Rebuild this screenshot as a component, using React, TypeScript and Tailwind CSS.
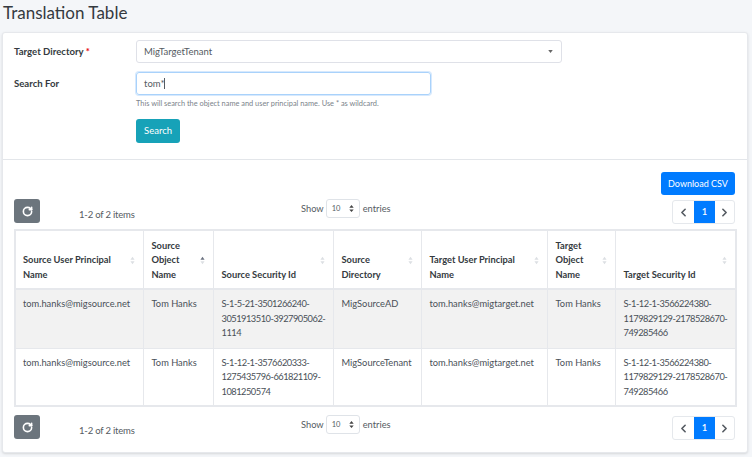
import { ChevronLeft, ChevronRight, RotateCw } from 'lucide-react';

const COLUMNS = [
  { title: ['Source User Principal', 'Name'], width: 'w-[128px]' },
  { title: ['Source', 'Object', 'Name'], width: 'w-[70px]', sorted: true },
  { title: ['Source Security Id'], width: 'w-[120px]' },
  { title: ['Source', 'Directory'], width: 'w-[88px]' },
  { title: ['Target User Principal', 'Name'], width: 'w-[126px]' },
  { title: ['Target', 'Object', 'Name'], width: 'w-[68px]' },
  { title: ['Target Security Id'], width: 'w-[121px]' },
];

const ROWS = [
  {
    striped: true,
    cells: [
      ['tom.hanks@migsource.net'],
      ['Tom Hanks'],
      ['S-1-5-21-3501266240-', '3051913510-3927905062-', '1114'],
      ['MigSourceAD'],
      ['tom.hanks@migtarget.net'],
      ['Tom Hanks'],
      ['S-1-12-1-3566224380-', '1179829129-2178528670-', '749285466'],
    ],
  },
  {
    striped: false,
    cells: [
      ['tom.hanks@migsource.net'],
      ['Tom Hanks'],
      ['S-1-12-1-3576620333-', '1275435796-661821109-', '1081250574'],
      ['MigSourceTenant'],
      ['tom.hanks@migtarget.net'],
      ['Tom Hanks'],
      ['S-1-12-1-3566224380-', '1179829129-2178528670-', '749285466'],
    ],
  },
];

function SortIcon({ active }: { active?: boolean }) {
  return (
    <svg width="5" height="9" viewBox="0 0 6 10" className="shrink-0">
      <path d="M3 0.5 L5.5 4 H0.5 Z" fill={active ? '#6b7280' : '#dcdfe3'} />
      <path d="M3 9.5 L5.5 6 H0.5 Z" fill="#dcdfe3" />
    </svg>
  );
}

function Toolbar() {
  return (
    <div className="flex items-start">
      <button className="w-[26px] h-[24px] bg-[#6c757d] rounded-[3px] flex items-center justify-center text-white">
        <RotateCw size={11} strokeWidth={3.5} />
      </button>
      <div className="ml-[39px] w-[222px] mt-[9px] text-[9.5px] leading-[14px] tracking-[-0.2px] text-[#555b62]">1-2 of 2 items</div>
      <div className="flex items-center gap-[2px] text-[9.3px] text-[#555b62] h-[19px]">
        <span>Show</span>
        <div className="w-[34px] h-[19px] border border-[#dfe3e8] rounded-[3px] flex items-center justify-between pl-[5px] pr-[5px] text-[7.5px]">
          <span>10</span>
          <svg width="5" height="7" viewBox="0 0 5 8">
            <path d="M2.5 0 L5 3 H0 Z M2.5 8 L5 5 H0 Z" fill="#444" />
          </svg>
        </div>
        <span className="ml-px">entries</span>
      </div>
      <div className="ml-auto mt-px flex h-[24px] w-[63px] border border-[#e5e8ec] rounded-[3px] overflow-hidden text-[#555b62]">
        <div className="w-[21px] flex items-center justify-center">
          <ChevronLeft size={13} strokeWidth={3} />
        </div>
        <div className="w-[21px] bg-[#007bff] text-white text-[9.5px] font-semibold flex items-center justify-center">1</div>
        <div className="flex-1 flex items-center justify-center">
          <ChevronRight size={13} strokeWidth={3} />
        </div>
      </div>
    </div>
  );
}

export default function App() {
  return (
    <div className="h-[457px] overflow-hidden bg-[#f4f6f9] px-[2px] font-['Lato','Noto_Sans',sans-serif] text-[#495057]">
      <h1 className="h-[32px] pl-px text-[17px] leading-[26px] text-[#343a40]">Translation Table</h1>

      <div className="h-[421px] w-[746px] bg-white border border-[#e6e8ec] rounded-[3px] shadow-sm">
        <div className="h-[127px] border-b border-[#e3e6ea] pl-[11px] pt-[7px]">
          <div className="flex items-center h-[23px]">
            <label className="w-[122px] pt-px text-[9.6px] font-bold text-[#343a40]">
              Target Directory <span className="text-red-600">*</span>
            </label>
            <div className="w-[426px] h-[23px] border border-[#dfe1e8] rounded-[3px] flex items-center justify-between pl-[7px] pr-[8px] text-[9.5px] text-[#555b62]">
              <span className="pt-px">MigTargetTenant</span>
              <svg width="5" height="3" viewBox="0 0 6 4">
                <path d="M0 0 H6 L3 4 Z" fill="#666" />
              </svg>
            </div>
          </div>
          <div className="flex items-center h-[23px] mt-[9px]">
            <label className="w-[122px] pt-px text-[9.6px] font-bold text-[#343a40]">Search For</label>
            <div className="w-[295px] h-[23px] border border-[#a9d2fb] rounded-[3px] shadow-[0_0_0_1px_#d7e9fd] flex items-center pl-[7px] text-[9.5px] text-[#555b62]">
              <span className="pt-px">tom*</span>
              <span className="w-px h-[11px] bg-[#555b62]" />
            </div>
          </div>
          <p className="ml-[122px] mt-[3px] text-[7.4px] leading-[11px] text-[#7b838a]">
            This will search the object name and user principal name. Use * as wildcard.
          </p>
          <button className="ml-[122px] mt-[10px] w-[44px] h-[24px] bg-[#17a2b8] rounded-[3px] text-white text-[9.5px]">Search</button>
        </div>

        <div className="pl-[11px] pr-[12px] pt-[12px]">
          <div className="flex justify-end">
            <button className="w-[74px] h-[23px] bg-[#007bff] rounded-[3px] text-white text-[9px]">Download CSV</button>
          </div>
          <div className="mt-[4px]">
            <Toolbar />
          </div>

          <table className="mt-[5px] w-[721px] table-fixed border-collapse border-2 border-[#e6e8ec] text-[9.3px] leading-[14.5px]">
            <thead>
              <tr className="h-[59px] border-b-2 border-[#e6e8ec]">
                {COLUMNS.map((col) => (
                  <th key={col.title.join(' ')} className={`${col.width} border-r border-[#e6e8ec] px-[8px] first:pl-[7px] align-bottom pb-[6px] text-left font-bold text-[#343a40] relative`}>
                    {col.title.map((line) => (
                      <div key={line} className="whitespace-nowrap">{line}</div>
                    ))}
                    <span className="absolute right-[8px] top-[25px] flex">
                      <SortIcon active={col.sorted} />
                    </span>
                  </th>
                ))}
              </tr>
            </thead>
            <tbody>
              {ROWS.map((row, i) => (
                <tr key={i} className={`${row.striped ? 'h-[59px] bg-[#f2f2f2]' : 'h-[58px]'} border-b border-[#e6e8ec]`}>
                  {row.cells.map((lines, j) => (
                    <td key={j} className="border-r border-[#e6e8ec] px-[8px] first:pl-[7px] pt-[7px] align-top">
                      {lines.map((line) => (
                        <div key={line} className={lines.length > 1 ? 'whitespace-nowrap tracking-[-0.5px]' : 'whitespace-nowrap'}>{line}</div>
                      ))}
                    </td>
                  ))}
                </tr>
              ))}
            </tbody>
          </table>

          <div className="mt-[8px]">
            <Toolbar />
          </div>
        </div>
      </div>
    </div>
  );
}
